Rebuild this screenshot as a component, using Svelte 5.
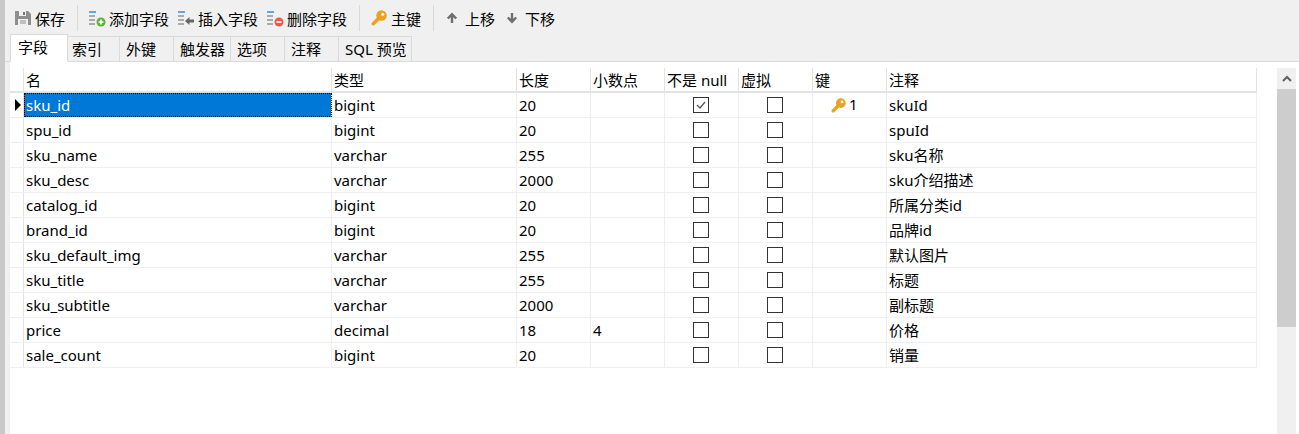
<script>
  const columns = [
    { label: '名', width: 308 },
    { label: '类型', width: 185 },
    { label: '长度', width: 74 },
    { label: '小数点', width: 74 },
    { label: '不是 null', width: 74 },
    { label: '虚拟', width: 74 },
    { label: '键', width: 74 },
    { label: '注释', width: 370 }
  ];

  const rows = [
    ['sku_id', 'bigint', '20', '', 'skuId'],
    ['spu_id', 'bigint', '20', '', 'spuId'],
    ['sku_name', 'varchar', '255', '', 'sku名称'],
    ['sku_desc', 'varchar', '2000', '', 'sku介绍描述'],
    ['catalog_id', 'bigint', '20', '', '所属分类id'],
    ['brand_id', 'bigint', '20', '', '品牌id'],
    ['sku_default_img', 'varchar', '255', '', '默认图片'],
    ['sku_title', 'varchar', '255', '', '标题'],
    ['sku_subtitle', 'varchar', '2000', '', '副标题'],
    ['price', 'decimal', '18', '4', '价格'],
    ['sale_count', 'bigint', '20', '', '销量']
  ];

  const tabs = [
    { label: '字段', width: 58 },
    { label: '索引', width: 52 },
    { label: '外键', width: 54 },
    { label: '触发器', width: 57 },
    { label: '选项', width: 54 },
    { label: '注释', width: 54 },
    { label: 'SQL 预览', width: 73 }
  ];
</script>

{#snippet key(size)}
  <svg width={size} height={size} viewBox="0 0 16 16">
    <circle cx="10.500" cy="5.500" r="5.200" fill="#eba21c" />
    <path d="M7.500 8.500L2.300 13.700" stroke="#eba21c" stroke-width="3.600" stroke-linecap="round" />
    <circle cx="11.800" cy="4.200" r="1.500" fill="#fff" />
  </svg>
{/snippet}

{#snippet fieldIcon(kind)}
  <svg width="17" height="17" viewBox="0 0 17 17">
    <rect x="0" y="1" width="7" height="2" fill="#5aa9e6" />
    <rect x="0" y="5" width="6" height="2" fill="#aaa" />
    <rect x="0" y="9" width="6" height="2" fill="#aaa" />
    <rect x="0" y="13" width="6" height="2" fill="#aaa" />
    {#if kind === 'add'}
      <circle cx="12" cy="12" r="4.5" fill="#5cb531" />
      <path d="M9.5 12h5M12 9.500v5" stroke="#fff" stroke-width="1.600" />
    {:else if kind === 'insert'}
      <path d="M7 11l4.500-4v2.500H16v3h-4.500V15z" fill="#666" />
    {:else}
      <circle cx="12" cy="12" r="4.500" fill="#f4574d" />
      <path d="M9.500 12h5" stroke="#fff" stroke-width="1.800" />
    {/if}
  </svg>
{/snippet}

<div class="window">
  <div class="toolbar">
    <button class="tool first">
      <svg width="16" height="16" viewBox="0 0 16 16">
        <path d="M0 1h13l3 3v11H0z" fill="#8f8f8f" />
        <rect x="4" y="1" width="7" height="5" fill="#f0f0f0" />
        <rect x="8" y="2" width="2" height="3" fill="#777" />
        <rect x="3" y="9" width="10" height="6" fill="#f0f0f0" />
        <path d="M5 11h6M5 13h6" stroke="#8f8f8f" />
      </svg>
      保存
    </button>
    <span class="sep"></span>
    <button class="tool">{@render fieldIcon('add')}添加字段</button>
    <button class="tool">{@render fieldIcon('insert')}插入字段</button>
    <button class="tool">{@render fieldIcon('del')}删除字段</button>
    <span class="sep"></span>
    <button class="tool primary">{@render key(16)}主键</button>
    <span class="sep"></span>
    <button class="tool arrow">
      <svg width="12" height="12" viewBox="0 0 12 12"><path d="M6 11V3M1.800 6.500L6 2.300l4.200 4.200" fill="none" stroke="#6f6f6f" stroke-width="2.400" /></svg>
      上移
    </button>
    <button class="tool arrow">
      <svg width="12" height="12" viewBox="0 0 12 12"><path d="M6 1v8M1.800 5.500L6 9.700l4.200-4.200" fill="none" stroke="#6f6f6f" stroke-width="2.400" /></svg>
      下移
    </button>
  </div>

  <div class="tabs">
    {#each tabs as tab, i}
      <div class="tab" class:active={i === 0} class:next={i === 1} style="width: {tab.width}px">{tab.label}</div>
    {/each}
  </div>

  <div class="body">
    <div class="grid">
      <div class="row head">
        <div class="gutter"></div>
        {#each columns as col}
          <div class="cell" style="width: {col.width}px">{col.label}</div>
        {/each}
      </div>
      {#each rows as row, r}
        <div class="row">
          <div class="gutter">
            {#if r === 0}<span class="marker"></span>{/if}
          </div>
          <div class="cell" class:selected={r === 0} style="width: {columns[0].width}px"><span>{row[0]}</span></div>
          <div class="cell" style="width: {columns[1].width}px">{row[1]}</div>
          <div class="cell" style="width: {columns[2].width}px">{row[2]}</div>
          <div class="cell" style="width: {columns[3].width}px">{row[3]}</div>
          <div class="cell center" style="width: {columns[4].width}px">
            <span class="check">
              {#if r === 0}
                <svg width="14" height="14" viewBox="0 0 14 14"><path d="M3 7l3 3 5-6" fill="none" stroke="#555" stroke-width="1.300" /></svg>
              {/if}
            </span>
          </div>
          <div class="cell center" style="width: {columns[5].width}px"><span class="check"></span></div>
          <div class="cell keycell" style="width: {columns[6].width}px">
            {#if r === 0}{@render key(15)}<span class="keynum">1</span>{/if}
          </div>
          <div class="cell" style="width: {columns[7].width}px">{row[4]}</div>
        </div>
      {/each}
    </div>

    <div class="scrollbar">
      <div class="up">
        <svg width="10" height="7" viewBox="0 0 10 7"><path d="M1 6l4-4 4 4" fill="none" stroke="#606060" stroke-width="2" /></svg>
      </div>
      <div class="thumb"></div>
    </div>
  </div>
</div>

<style>
  :global(body) {
    margin: 0;
    background: #fff;
  }

  .window {
    width: 1299px;
    height: 434px;
    display: flex;
    flex-direction: column;
    overflow: hidden;
    box-sizing: border-box;
    border-left: 5px solid #c9c9c9;
    background: #f0f0f0;
    color: #000;
    font-family: "Noto Sans", "Noto Sans CJK SC", sans-serif;
    font-size: 15px;
  }

  .toolbar {
    height: 34px;
    flex: none;
    display: flex;
    align-items: center;
    padding-left: 10px;
    padding-top: 2px;
    box-sizing: border-box;
  }

  .tool {
    display: flex;
    align-items: center;
    gap: 3px;
    margin-right: 9px;
    padding: 0;
    border: 0;
    background: none;
    font: inherit;
    color: inherit;
  }

  .tool.first,
  .tool.primary {
    gap: 4px;
  }

  .tool.arrow {
    gap: 7px;
    margin-left: 1px;
    margin-right: 10px;
  }

  .sep {
    width: 1px;
    height: 26px;
    margin: 0 11px 0 3px;
    background: #d9d9d9;
  }

  .tabs {
    height: 28px;
    box-sizing: border-box;
    flex: none;
    display: flex;
    align-items: flex-end;
    padding-left: 5px;
    border-bottom: 1px solid #dadada;
  }

  .tab {
    height: 26px;
    box-sizing: border-box;
    margin-bottom: -1px;
    border: 1px solid #dadada;
    border-left: 0;
    padding-left: 6px;
    line-height: 24px;
    white-space: nowrap;
  }

  .tab.next {
    padding-left: 4px;
  }

  .tab.active {
    height: 28px;
    padding-left: 7px;
    background: #fff;
    border-left: 1px solid #dadada;
    border-bottom-color: #fff;
    line-height: 24px;
    position: relative;
  }

  .body {
    flex: 1;
    display: flex;
    margin-left: 5px;
    padding-top: 6px;
    background: #fff;
    min-height: 0;
  }

  .grid {
    width: 1247px;
    flex: none;
  }

  .row {
    display: flex;
    height: 25px;
    box-sizing: border-box;
    border-bottom: 1px solid #efefef;
    font-size: 15px;
    line-height: 24px;
  }

  .row.head {
    border-bottom: 2px solid #e3e3e3;
  }

  .gutter {
    width: 13px;
    flex: none;
    position: relative;
    border-right: 1px solid #e3e3e3;
  }

  .cell {
    flex: none;
    box-sizing: border-box;
    padding-left: 2px;
    border-right: 1px solid #efefef;
    white-space: nowrap;
    overflow: hidden;
  }

  .head .cell {
    border-right-color: #e3e3e3;
  }

  .selected {
    padding-left: 0;
    background: #0078d7;
    color: #fff;
    outline: 1px dotted #000;
    outline-offset: -1px;
  }

  .selected span {
    padding-left: 2px;
  }

  .marker {
    position: absolute;
    left: 5px;
    top: 6px;
    border-left: 6px solid #000;
    border-top: 6px solid transparent;
    border-bottom: 6px solid transparent;
  }

  .center {
    display: flex;
    align-items: center;
    justify-content: center;
    padding: 0 1px 0 0;
  }

  .check {
    width: 16px;
    height: 16px;
    box-sizing: border-box;
    border: 1px solid #333;
    display: flex;
    align-items: center;
    justify-content: center;
    background: #fff;
  }

  .keycell {
    display: flex;
    align-items: center;
    padding-left: 18px;
    gap: 3px;
  }

  .keynum {
    margin-top: -3px;
  }

  .scrollbar {
    width: 19px;
    flex: none;
    margin-left: 20px;
    background: #f0f0f0;
  }

  .up {
    height: 21px;
    display: flex;
    align-items: center;
    justify-content: center;
  }

  .thumb {
    height: 238px;
    background: #cdcdcd;
  }
</style>
